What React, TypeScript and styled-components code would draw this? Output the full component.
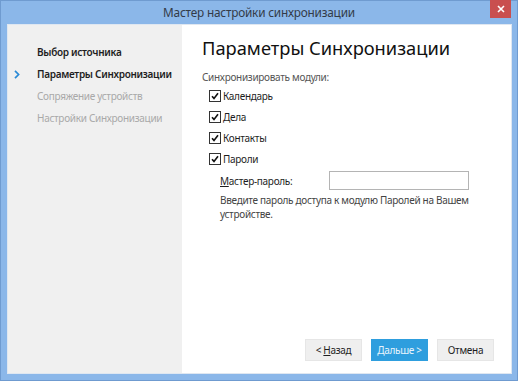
import React, { useState } from 'react';
import styled, { createGlobalStyle } from 'styled-components';

const GlobalStyle = createGlobalStyle`
  html, body {
    margin: 0;
    padding: 0;
    background: #ffffff;
  }
  body {
    font-family: "Noto Sans", "Open Sans", "DejaVu Sans", sans-serif;
  }
`;

const Frame = styled.div`
  width: 518px;
  height: 381px;
  box-sizing: border-box;
  background: #8bb7e9;
  border: 1px solid #6f9bd0;
  display: flex;
  flex-direction: column;
`;

const TitleBar = styled.div`
  height: 22px;
  position: relative;
  display: flex;
  align-items: center;
  justify-content: center;
  font-size: 11.8px;
  letter-spacing: -0.2px;
  color: #333b48;
  padding-bottom: 1px;
`;

const CloseButton = styled.button`
  position: absolute;
  top: -1px;
  right: 6px;
  width: 21px;
  height: 18px;
  border: none;
  padding: 0;
  background: #c94f4f;
  display: flex;
  align-items: center;
  justify-content: center;
`;

const Client = styled.div`
  flex: 1;
  margin: 0 5px 6px 6px;
  border: 1px solid #dfe7f1;
  background: #ffffff;
  display: flex;
  min-height: 0;
`;

const Sidebar = styled.nav`
  width: 174px;
  background: #f0f0f0;
  padding-top: 16px;
  display: flex;
  flex-direction: column;
`;

const Step = styled.div<{ $state: 'done' | 'current' | 'todo' }>`
  height: 22px;
  display: flex;
  align-items: center;
  padding-left: 29px;
  position: relative;
  white-space: nowrap;
  font-size: 10px;
  letter-spacing: -0.3px;
  font-weight: ${(p) => (p.$state === 'todo' ? 400 : 600)};
  color: ${(p) => (p.$state === 'todo' ? '#a9a9a9' : '#1e1e1e')};
`;

const Chevron = styled.svg`
  position: absolute;
  left: 6px;
  top: 7px;
`;

const Main = styled.div`
  flex: 1;
  display: flex;
  flex-direction: column;
  padding: 10px 17px 12px 20px;
`;

const Heading = styled.h1`
  margin: 0;
  font-size: 18.3px;
  font-weight: 400;
  color: #111;
  line-height: 26px;
  white-space: nowrap;
`;

const Caption = styled.div`
  margin-top: 9px;
  font-size: 10px;
  letter-spacing: -0.3px;
  color: #555;
  line-height: 14px;
`;

const CheckList = styled.div`
  margin-top: 1px;
  padding-left: 7px;
  display: flex;
  flex-direction: column;
`;

const CheckRow = styled.label`
  height: 21px;
  display: flex;
  align-items: center;
  gap: 2px;
  font-size: 10px;
  letter-spacing: -0.3px;
  color: #1e1e1e;
`;

const Box = styled.span`
  width: 10px;
  height: 10px;
  border: 1px solid #333;
  background: #fff;
  display: flex;
  align-items: center;
  justify-content: center;
`;

const PasswordBlock = styled.div`
  padding-left: 18px;
  margin-top: 2px;
`;

const FieldRow = styled.div`
  display: flex;
  align-items: center;
  font-size: 10px;
  letter-spacing: -0.3px;
  color: #1e1e1e;
`;

const FieldLabel = styled.span`
  width: 109px;
  u {
    text-decoration: underline;
  }
`;

const Input = styled.input`
  width: 140px;
  height: 19px;
  box-sizing: border-box;
  border: 1px solid #b4b4b4;
  outline: none;
`;

const Hint = styled.p`
  margin: 3px 0 0;
  width: 260px;
  font-size: 10px;
  letter-spacing: -0.3px;
  line-height: 14px;
  color: #444;
`;

const Spacer = styled.div`
  flex: 1;
`;

const ButtonRow = styled.div`
  display: flex;
  justify-content: flex-end;
  gap: 9px;
`;

const Button = styled.button<{ $primary?: boolean }>`
  width: 57px;
  height: 22px;
  border: 1px solid ${(p) => (p.$primary ? '#2e9ede' : '#e6e6e6')};
  background: ${(p) => (p.$primary ? '#2e9ede' : '#efefef')};
  color: ${(p) => (p.$primary ? '#e8f4fc' : '#1e1e1e')};
  font-family: inherit;
  font-size: 10px;
  letter-spacing: -0.3px;
  padding: 0;
  u {
    text-decoration: underline;
  }
`;

const steps: { label: string; state: 'done' | 'current' | 'todo' }[] = [
  { label: 'Выбор источника', state: 'done' },
  { label: 'Параметры Синхронизации', state: 'current' },
  { label: 'Сопряжение устройств', state: 'todo' },
  { label: 'Настройки Синхронизации', state: 'todo' },
];

const modules = ['Календарь', 'Дела', 'Контакты', 'Пароли'];

const CheckMark = () => (
  <svg width="8" height="8" viewBox="0 0 8 8">
    <path d="M1 4.2 L3 6.4 L7 1.2" fill="none" stroke="#111" strokeWidth="1.6" />
  </svg>
);

export default function App() {
  const [password, setPassword] = useState('');

  return (
    <>
      <GlobalStyle />
      <Frame>
        <TitleBar>
          Мастер настройки синхронизации
          <CloseButton aria-label="Закрыть">
            <svg width="8" height="8" viewBox="0 0 8 8">
              <path d="M1 1 L7 7 M7 1 L1 7" stroke="#fff" strokeWidth="1.6" />
            </svg>
          </CloseButton>
        </TitleBar>
        <Client>
          <Sidebar>
            {steps.map((s) => (
              <Step key={s.label} $state={s.state}>
                {s.state === 'current' && (
                  <Chevron width="6" height="9" viewBox="0 0 6 9">
                    <path d="M1 0.8 L4.6 4.5 L1 8.2" fill="none" stroke="#2a8ad6" strokeWidth="1.7" />
                  </Chevron>
                )}
                {s.label}
              </Step>
            ))}
          </Sidebar>
          <Main>
            <Heading>Параметры Синхронизации</Heading>
            <Caption>Синхронизировать модули:</Caption>
            <CheckList>
              {modules.map((m) => (
                <CheckRow key={m}>
                  <Box>
                    <CheckMark />
                  </Box>
                  {m}
                </CheckRow>
              ))}
            </CheckList>
            <PasswordBlock>
              <FieldRow>
                <FieldLabel>
                  <u>М</u>астер-пароль:
                </FieldLabel>
                <Input type="password" value={password} onChange={(e) => setPassword(e.target.value)} />
              </FieldRow>
              <Hint>Введите пароль доступа к модулю Паролей на Вашем устройстве.</Hint>
            </PasswordBlock>
            <Spacer />
            <ButtonRow>
              <Button>
                &lt; <u>Н</u>азад
              </Button>
              <Button $primary>Дальше &gt;</Button>
              <Button>Отмена</Button>
            </ButtonRow>
          </Main>
        </Client>
      </Frame>
    </>
  );
}
